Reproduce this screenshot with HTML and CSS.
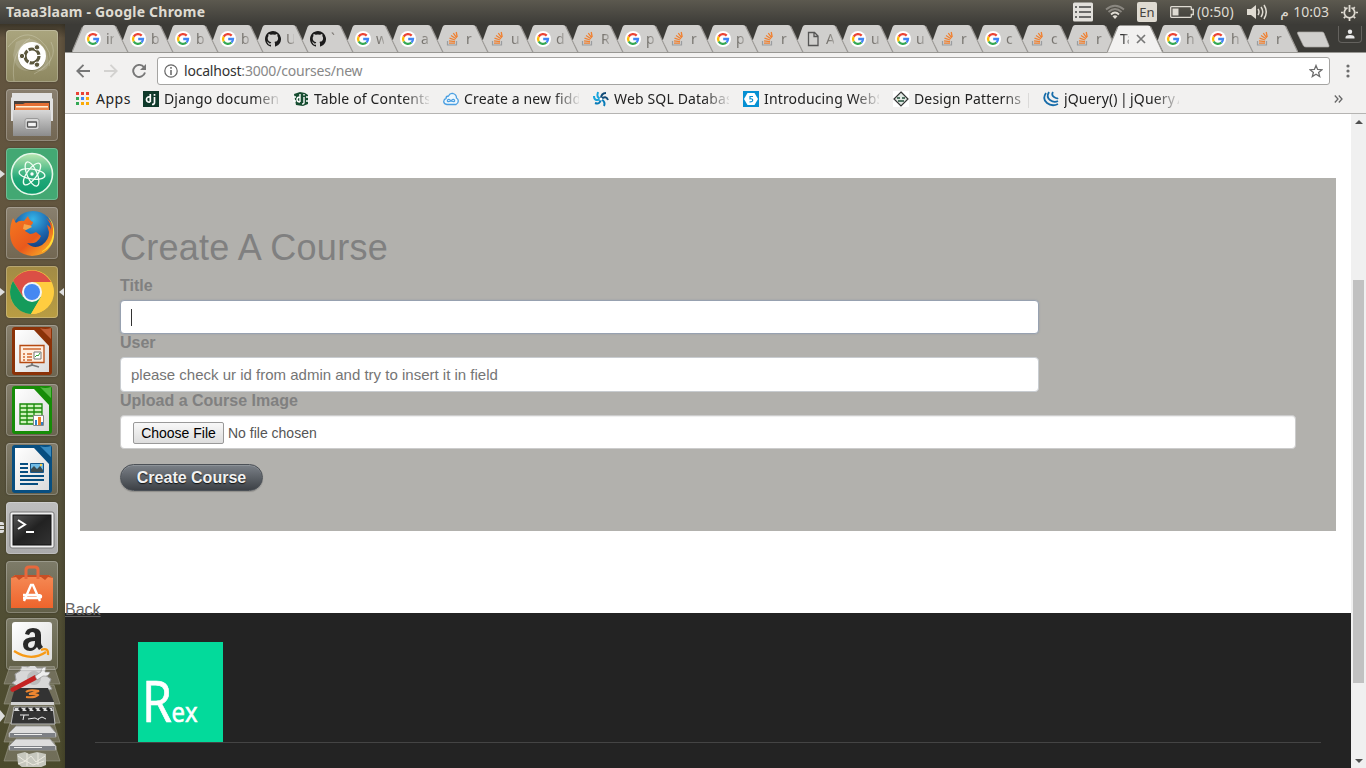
FILE: index.html
```html
<!DOCTYPE html>
<html lang="en">
<head>
<meta charset="utf-8">
<title>Taaa3laam</title>
<link rel="stylesheet" href="styles.css">
</head>
<body>
<svg class="defs" width="0" height="0" aria-hidden="true">
  <defs>
    <linearGradient id="paper" x2="1" y2="1"><stop stop-color="#fff"/><stop offset="1" stop-color="#dcdcdc"/></linearGradient>
    <linearGradient id="silver" x2="0" y2="1"><stop stop-color="#d8d8d8"/><stop offset="1" stop-color="#8c8c8c"/></linearGradient>
    <linearGradient id="bag" x2="0" y2="1"><stop stop-color="#f58a55"/><stop offset="1" stop-color="#ee642c"/></linearGradient>
    <linearGradient id="atomg" x2="0" y2="1"><stop stop-color="#b9e6b0"/><stop offset=".6" stop-color="#22a878"/><stop offset="1" stop-color="#0c9c6c"/></linearGradient>
    <linearGradient id="fox" x2="1" y2="1"><stop stop-color="#f47a20"/><stop offset=".55" stop-color="#e9591c"/><stop offset="1" stop-color="#ffc62a"/></linearGradient>
    <radialGradient id="globe" cx=".5" cy=".2" r=".8"><stop stop-color="#35b4e8"/><stop offset=".5" stop-color="#1d66ad"/><stop offset="1" stop-color="#142e6a"/></radialGradient>
    <linearGradient id="screen" x2="1" y2="1"><stop stop-color="#555"/><stop offset=".5" stop-color="#222"/><stop offset="1" stop-color="#333"/></linearGradient>
  </defs>
  <symbol id="tab" viewBox="0 0 56 28"><path class="tab-fill" d="M11.300 28L5.700 16.500L10.500 3Q11.500 1 13 1H41Q43 1 44 3L55.800 28Z"/><path class="tab-line" d="M43.500 2L55.800 28"/></symbol>
  <symbol id="tab-full" viewBox="0 0 56 28"><path class="tab-fill" d="M0 28L10.500 3Q11.500 1 13 1H41Q43 1 44 3L55.800 28Z"/><path class="tab-line" d="M0 28L10.500 3M43.500 2L55.800 28"/></symbol>
  <symbol id="google" viewBox="0 0 16 16"><circle cx="8" cy="8" r="8" fill="#fff"/><g fill="none" stroke-width="2.300"><path d="M11.700 4.600A5 5 0 0 0 3.700 5.600" stroke="#ea4335"/><path d="M3.700 5.600A5 5 0 0 0 3.700 10.500" stroke="#fbbc05"/><path d="M3.700 10.500A5 5 0 0 0 11.500 11.500" stroke="#34a853"/><path d="M11.500 11.500A5 5 0 0 0 13 8H8.200" stroke="#4285f4"/></g></symbol>
  <symbol id="github" viewBox="0 0 16 16"><path fill="#1b1b1b" d="M8 0C3.600 0 0 3.600 0 8c0 3.500 2.300 6.500 5.500 7.600.4.100.5-.2.500-.4v-1.500c-2 .5-2.700-.8-2.900-1.300-.1-.3-.5-.9-.9-1.100-.3-.2-.7-.6 0-.6.600 0 1.100.6 1.200.8.700 1.200 1.900.9 2.400.7.100-.5.300-.9.500-1.100C4.500 10.900 2.700 10.200 2.700 7.100c0-.9.300-1.600.8-2.100-.1-.2-.3-1 .1-2.100 0 0 .7-.2 2.200.8a7.500 7.500 0 0 1 4.200 0c1.500-1 2.200-.8 2.200-.8.400 1.100.2 1.900.1 2.100.5.600.8 1.300.8 2.100 0 3.100-1.900 3.700-3.700 3.900.3.300.6.700.6 1.500v2.700c0 .2.100.5.500.4A8 8 0 0 0 8 0Z"/></symbol>
  <symbol id="stack" viewBox="0 0 16 16"><path d="M2.500 10v4h9v-4" fill="none" stroke="#9a9da0" stroke-width="1.200"/><path d="M4 12.200h6M4 9.900l6 .7M4.500 7.200l5.700 1.800M6 4.500l5 3.200M8.300 2.200l3.500 4.600M11.200 1l1 5" fill="none" stroke="#f08030" stroke-width="1.300"/></symbol>
  <symbol id="page" viewBox="0 0 16 16"><path d="M3.500 1.500h6l3.500 3.500v9.500H3.500zM9 1.500v4h4" fill="none" stroke="#555" stroke-width="1.300"/></symbol>
</svg>

<header class="panel">
  <h1 class="panel-title">Taaa3laam - Google Chrome</h1>
  <div class="tray">
    <svg width="20" height="20" viewBox="0 0 20 20"><rect y=".5" width="20" height="19" rx="1.500" fill="#e2e0db"/><path d="M2 5h2M2 10h2M2 15h2M6 5h12M6 10h12M6 15h12" stroke="#444" stroke-width="1.600"/></svg>
    <svg class="wifi" width="20" height="16" viewBox="0 0 20 16"><g fill="none" stroke-width="1.800"><path d="M1 5.500Q10-2 19 5.500M3.500 8Q10 2 16.500 8" stroke="#8a8780"/><path d="M6 10.500Q10 6.500 14 10.500" stroke="#dfdbd2"/></g><path d="M7.500 12.300Q10 10 12.500 12.300L10 15Z" fill="#dfdbd2"/></svg>
    <span class="lang">En</span>
    <svg class="battery" width="24" height="12" viewBox="0 0 24 12"><path d="M1.500.7h19q.8 0 .8.800v2h2v5h-2v2q0 .8-.8.800h-19q-.8 0-.8-.8v-9q0-.8.8-.8Z" fill="none" stroke="#dfdbd2" stroke-width="1.300"/><path d="M2.500 2.500h6v7h-6z" fill="#dfdbd2"/></svg>
    <span class="battery-time">(0:50)</span>
    <svg class="sound" width="20" height="16" viewBox="0 0 20 16"><path d="M0 5h4l5-4v14l-5-4H0Z" fill="#dfdbd2"/><path d="M11 5q2 3 0 6M14 3q3.500 5 0 10M17 1q4.500 7 0 14" fill="none" stroke="#dfdbd2" stroke-width="1.500"/></svg>
    <span class="clock"><bdi class="pm">م</bdi><bdi>10:03</bdi></span>
    <svg class="gear" width="17" height="17" viewBox="0 0 17 17"><path d="M6.500 3.800A5.200 5.200 0 1 0 10.500 3.800" fill="none" stroke="#dfdbd2" stroke-width="1.700"/><path d="M8.500 1v7" stroke="#dfdbd2" stroke-width="1.800"/><path d="M3.200 3.200l1.600 1.600M13.800 3.200l-1.600 1.600M0 8.500h2.500M14.500 8.500H17M2.800 14.200l1.600-1.600M14.200 14.200l-1.600-1.600M8.500 14v3" stroke="#dfdbd2" stroke-width="1.700"/></svg>
  </div>
</header>

<div class="desktop">
<nav class="launcher">
  <div class="tile dash"><svg viewBox="0 0 52 52"><g fill="none" stroke="#e5e3cf" stroke-opacity=".3"><path d="M8 51Q4 22 24 8M45 12Q54 30 28 44M2 17Q18-3 34 10Q48 22 43 36" stroke-width="1"/></g><path d="M10 12Q30 2 41 23Q48 45 26 40Q10 44 7 25" fill="#fff" opacity=".15"/><circle cx="26" cy="27" r="14" fill="#666342" opacity=".5"/><circle cx="26" cy="26" r="14" fill="#fff"/><circle cx="26" cy="26" r="7" fill="none" stroke="#5b573d" stroke-width="3.200" stroke-dasharray="13.200 1.460"/><g fill="#5b573d" stroke="#fff"><circle cx="16" cy="26" r="2.700"/><circle cx="31" cy="17.300" r="2.700"/><circle cx="31" cy="34.700" r="2.700"/></g></svg></div>
  <div class="tile files"><svg viewBox="0 0 52 52"><path d="M6 4h40v5l1 1v22H5V9l1-1z" fill="#e2e2e2"/><path d="M8 12h36v10H8z" fill="#48413c"/><path d="M9 15h8l2-1h24v7H9z" fill="#e46f34"/><path d="M10 17h32v5H10z" fill="#fff0d7"/><path d="M9 18.500h34V22H9z" fill="#ee8549"/><path d="M7 21h38v26H7z" fill="url(#silver)"/><rect x="19" y="29.500" width="14" height="11" rx="2" fill="#d8d8d8" stroke="#999"/><rect x="21.500" y="33" width="9" height="5" rx=".5" fill="#f3f3f3" stroke="#545454" stroke-width="1.300"/></svg></div>
  <div class="tile atom run-left"><svg viewBox="0 0 52 52"><circle cx="26" cy="26" r="20.500" fill="url(#atomg)" stroke="#e5f8e9" stroke-width="1.600"/><g fill="none" stroke="#f2fff5" stroke-width="1.300"><ellipse cx="26" cy="26" rx="13" ry="5" transform="rotate(8 26 26)"/><ellipse cx="26" cy="26" rx="13" ry="5" transform="rotate(67 26 26)"/><ellipse cx="26" cy="26" rx="13" ry="5" transform="rotate(126 26 26)"/></g><circle cx="26" cy="26" r="1.700" fill="#fff"/></svg></div>
  <div class="tile"><svg viewBox="0 0 52 52"><circle cx="27" cy="25" r="21" fill="url(#globe)"/><path d="M7 11l3 5q3-3 8-2l4-5q1 4 5 6 0 3-5 5l-3 4 5 3q3 0 6-2l5 4q-4 9-14 7 7 7 15 2 7-5 7-13l-2-7q3 1 4 5 0-8-5-12 9 5 8 17-2 20-22 21Q5 46 4 27q0-9 3-16Z" fill="url(#fox)"/><path d="M42 10q6 7 5 17-2 12-12 18 15-5 13-23-1-8-6-12Z" fill="#ffde38"/><path d="M18 17l4 1q3 0 4 2l-6 3-3-1Z" fill="#f6a44a"/></svg></div>
  <div class="tile chrome run-left run-right"><svg viewBox="0 0 52 52"><circle cx="26" cy="26" r="22" fill="#ffcf40"/><path d="M7 15A22 22 0 0 1 45 16H26L17 31Z" fill="#db4f45"/><path d="M7 15A22 22 0 0 0 25 48L35 31 17 31Z" fill="#159b5b"/><path d="M45 16A22 22 0 0 1 25 48L35 31Q38 23 32 16Z" fill="#ffcd40"/><circle cx="26" cy="26" r="10" fill="#f4f4f4"/><circle cx="26" cy="26" r="8" fill="#4688f1"/></svg></div>
  <div class="tile"><svg viewBox="0 0 52 52"><rect x="6" y="2" width="40" height="48" rx="3" fill="#8b3208"/><path d="M34 3q5 2 11 0v11Z" fill="#bf6038"/><path d="M9 5h19l15 16v26H9Z" fill="url(#paper)"/><path d="M14 20.500h24v17H14Z" fill="#ffeedf" stroke="#b64a12" stroke-width="1.300"/><path d="M17 24h18M17 29h2M17 32h2M17 35h2M21 29h5M21 32h5M21 35h5" stroke="#cf6830" stroke-width="1.700"/><path d="M28 27h7v7h-7Z" fill="#fff" stroke="#777"/><path d="M29 32l2-2 1 1 2-3" fill="none" stroke="#37a339"/><path d="M26 38v2l-6 2M26 40l7 2" fill="none" stroke="#777" stroke-width="1.800"/></svg></div>
  <div class="tile"><svg viewBox="0 0 52 52"><rect x="6" y="2" width="40" height="48" rx="3" fill="#168c07"/><path d="M34 3q5 2 11 0v11Z" fill="#55b944"/><path d="M9 5h19l15 16v26H9Z" fill="url(#paper)"/><path d="M14 20h22v20H14ZM14 24h22M14 28h22M14 32h22M14 36h22M21 20v20M28 20v20" fill="#cff2bb" stroke="#188909" stroke-width="1.300"/><path d="M27.500 31.500h10v10h-10z" fill="#fff" stroke="#888"/><path d="M29 41v-5h2v5M35 41v-3h2v3" fill="#3282c6"/><path d="M32 41v-8h3v8" fill="#eb812a"/></svg></div>
  <div class="tile"><svg viewBox="0 0 52 52"><rect x="6" y="2" width="40" height="48" rx="3" fill="#074e80"/><path d="M34 3q5 2 11 0v11Z" fill="#398bc0"/><path d="M9 5h19l15 16v26H9Z" fill="url(#paper)"/><path d="M14 21h8M14 25h8M14 29h8M14 33h24M14 37h24M14 41h18" stroke="#074e80" stroke-width="1.900"/><path d="M24.500 20.500h13v9h-13z" fill="#70bbe6" stroke="#17588b"/><path d="M25 29v-3l3-3 3 3 3-3 3 4v2Z" fill="#3a4b51"/><circle cx="35" cy="22" r="1.200" fill="#ffcc45"/></svg></div>
  <div class="tile terminal run-many"><svg viewBox="0 0 52 52"><rect x="4" y="10" width="44" height="36" rx="2" fill="#f0f0f0" stroke="#777"/><rect x="7" y="13" width="38" height="30" fill="url(#screen)" stroke="#111"/><path d="M12 18l7 4.500-7 4.500M20 30h8" fill="none" stroke="#fff" stroke-width="2"/></svg></div>
  <div class="tile"><svg viewBox="0 0 52 52"><path d="M5 17l4-3h34l4 3v30H5Z" fill="url(#bag)"/><path d="M5 17l4-3h34l4 3-5-1-3 3-4-3H17l-4 3-3-3Z" fill="#c84e24"/><path d="M20 18V9q0-3 3-3h6q3 0 3 3v9" fill="none" stroke="#e7683c" stroke-width="3"/><path d="M18 40l7-16h2l7 16M17 34h15q3 0 3 1.500T32 37H17" fill="none" stroke="#fff" stroke-width="2.400"/></svg></div>
  <div class="tile amazon"><svg viewBox="0 0 52 52"><rect x="6" y="4" width="40" height="39" rx="3" fill="url(#paper)"/><path d="M19 16q1-6 8-6 8 0 8 7v8q0 2 2 4l-4 3-2-3q-3 4-7 4-7 0-7-7 0-7 12-7v-2q0-3-3-3-2 0-3 3Zm10 7q-7 0-7 4 0 3 3 3 4 0 4-7Z" fill="#282828"/><path d="M8 33q17 11 32 1M35 32q8-3 7 5" fill="none" stroke="#f79a16" stroke-width="2.200"/></svg></div>
  <svg class="folded" width="65" height="101" viewBox="0 0 65 101">
    <g fill="#8f8d7d" fill-opacity=".55" stroke="#a5a394" stroke-opacity=".5"><path d="M10 0H54L60 18H4ZM10 19H54L60 38H4ZM10 38H54L60 57H4ZM10 57H54L60 76H4ZM10 76H54L60 95H4Z"/></g>
    <path d="M15 8l5-3 2-5 6 1 5-3 4 4 7 0 1 7 6 4-2 5 3 5-9 3H18l1-5-7-4 4-3Z" fill="#d8d8d8" stroke="#999"/><circle cx="34" cy="12" r="7" fill="#bcbcbc"/>
    <path d="M15 22h33l6 14H11Z" fill="#333"/><path d="M11 36h43v3H11Z" fill="#d0d0d0"/><path d="M26 26q3-3 13-1l-10 3q8 0 9 1-3 3-12 2" fill="none" stroke="#ed8630" stroke-width="2"/>
    <path d="M11 22L35 9l3 4-25 13q-4-1-2-4Z" fill="#c42322"/><path d="M35 10l6-4q0-5 5-5l-1 5 5 0q-1 5-7 4l-6 4Z" fill="#eee" stroke="#888" stroke-width=".6"/>
    <path d="M14 41h39l2 17H11Z" fill="#333" stroke="#bbb"/><path d="M15 42h37l1 3H14Z" fill="#ddd"/><path d="M19 42l3 3M26 42l3 3M33 42l3 3M40 42l3 3M47 42l3 3" stroke="#222" stroke-width="3"/><path d="M20 49h9M24 49l-1 5M28 53l7-1 4 2M38 53l4-2 4 2" fill="none" stroke="#eee"/>
    <path d="M16 60h34l6 7v4H9v-4ZM16 73h34l6 7v4H9v-4Z" fill="#ddd" stroke="#999"/><path d="M10 67h45v4H10ZM10 80h45v4H10Z" fill="#7d8085"/><path d="M14 68.500h28M14 81.500h28" stroke="#eee"/>
    <path d="M17 88l8-2 4 2 8-2 9 2v11l-7 3H23l-5-4Z" fill="#c6c7be"/><path d="M18 90l7 5 6-5 5 6 9-6M18 98l8-3 7 4 11-4M27 87v13M38 87v12" stroke="#eceae0" fill="none"/>
    <path d="M0 44l5 6-5 6Z" fill="#ddd"/>
  </svg>
</nav>

<section class="browser">
  <div class="tabstrip">
    <div class="tab"><svg class="shape"><use href="#tab-full"/></svg><svg class="fav"><use href="#google"/></svg><span>in</span></div>
    <div class="tab"><svg class="shape"><use href="#tab"/></svg><svg class="fav"><use href="#google"/></svg><span>b</span></div>
    <div class="tab"><svg class="shape"><use href="#tab"/></svg><svg class="fav"><use href="#google"/></svg><span>b</span></div>
    <div class="tab"><svg class="shape"><use href="#tab"/></svg><svg class="fav"><use href="#google"/></svg><span>b</span></div>
    <div class="tab"><svg class="shape"><use href="#tab"/></svg><svg class="fav"><use href="#github"/></svg><span>U</span></div>
    <div class="tab"><svg class="shape"><use href="#tab"/></svg><svg class="fav"><use href="#github"/></svg><span>`</span></div>
    <div class="tab"><svg class="shape"><use href="#tab"/></svg><svg class="fav"><use href="#google"/></svg><span>w</span></div>
    <div class="tab"><svg class="shape"><use href="#tab"/></svg><svg class="fav"><use href="#google"/></svg><span>a</span></div>
    <div class="tab"><svg class="shape"><use href="#tab"/></svg><svg class="fav"><use href="#stack"/></svg><span>r</span></div>
    <div class="tab"><svg class="shape"><use href="#tab"/></svg><svg class="fav"><use href="#stack"/></svg><span>u</span></div>
    <div class="tab"><svg class="shape"><use href="#tab"/></svg><svg class="fav"><use href="#google"/></svg><span>d</span></div>
    <div class="tab"><svg class="shape"><use href="#tab"/></svg><svg class="fav"><use href="#stack"/></svg><span>R</span></div>
    <div class="tab"><svg class="shape"><use href="#tab"/></svg><svg class="fav"><use href="#google"/></svg><span>p</span></div>
    <div class="tab"><svg class="shape"><use href="#tab"/></svg><svg class="fav"><use href="#stack"/></svg><span>r</span></div>
    <div class="tab"><svg class="shape"><use href="#tab"/></svg><svg class="fav"><use href="#google"/></svg><span>p</span></div>
    <div class="tab"><svg class="shape"><use href="#tab"/></svg><svg class="fav"><use href="#stack"/></svg><span>r</span></div>
    <div class="tab"><svg class="shape"><use href="#tab"/></svg><svg class="fav"><use href="#page"/></svg><span>A</span></div>
    <div class="tab"><svg class="shape"><use href="#tab"/></svg><svg class="fav"><use href="#google"/></svg><span>u</span></div>
    <div class="tab"><svg class="shape"><use href="#tab"/></svg><svg class="fav"><use href="#google"/></svg><span>u</span></div>
    <div class="tab"><svg class="shape"><use href="#tab"/></svg><svg class="fav"><use href="#stack"/></svg><span>r</span></div>
    <div class="tab"><svg class="shape"><use href="#tab"/></svg><svg class="fav"><use href="#google"/></svg><span>c</span></div>
    <div class="tab"><svg class="shape"><use href="#tab"/></svg><svg class="fav"><use href="#stack"/></svg><span>c</span></div>
    <div class="tab"><svg class="shape"><use href="#tab"/></svg><svg class="fav"><use href="#stack"/></svg><span>r</span></div>
    <div class="tab active"><svg class="shape"><use href="#tab-full"/></svg><span>Ta</span><svg class="close" width="10" height="10" viewBox="0 0 10 10"><path d="M1 1l8 8M9 1L1 9" stroke="#777" stroke-width="1.700"/></svg></div>
    <div class="tab"><svg class="shape"><use href="#tab"/></svg><svg class="fav"><use href="#google"/></svg><span>h</span></div>
    <div class="tab"><svg class="shape"><use href="#tab"/></svg><svg class="fav"><use href="#google"/></svg><span>h</span></div>
    <div class="tab"><svg class="shape"><use href="#tab"/></svg><svg class="fav"><use href="#stack"/></svg><span>r</span></div>
    <svg class="newtab" width="34" height="17" viewBox="0 0 34 17"><path d="M2.500 1H26q1.500 0 2 1.200L33 14.500q.5 1.500-1 1.500H10q-2 0-2.700-1.500L1.500 2.500Q1 1 2.500 1Z" fill="#d0cfcd" stroke="#aaa8a3" stroke-width=".7"/></svg>
    <div class="profile"><svg width="10" height="10" viewBox="0 0 10 10"><circle cx="5" cy="2.700" r="2.200" fill="#e8e8e8"/><path d="M.5 9.500V8Q1 6 5 6t4.500 2v1.500Z" fill="#e8e8e8"/></svg></div>
  </div>

  <div class="toolbar">
    <svg class="back" width="14" height="14" viewBox="0 0 14 14"><path d="M14 7H1.500M7.500.8L1.300 7l6.200 6.200" fill="none" stroke="#777" stroke-width="1.900"/></svg>
    <svg class="forward" width="14" height="14" viewBox="0 0 14 14"><path d="M0 7h12.500M6.500.8L12.700 7l-6.200 6.200" fill="none" stroke="#d3d2d0" stroke-width="1.900"/></svg>
    <svg class="reload" width="14" height="14" viewBox="0 0 14 14"><path d="M12 3.300A6 6 0 1 0 13 8.500" fill="none" stroke="#777" stroke-width="1.900"/><path d="M14 0v6H8Z" fill="#777"/></svg>
    <div class="omnibox">
      <svg width="14" height="14" viewBox="0 0 14 14"><circle cx="7" cy="7" r="6.200" fill="none" stroke="#666" stroke-width="1.200"/><path d="M7 3v1.700M7 6v5" stroke="#666" stroke-width="1.500"/></svg>
      <span class="url"><b>localhost</b>:3000/courses/new</span>
      <svg class="star" width="14" height="14" viewBox="0 0 14 14"><path d="M7 1.500l1.600 3.900 4.300.3-3.300 2.700 1.100 4.200L7 10.300l-3.700 2.300 1.100-4.200L1.100 5.700l4.300-.3Z" fill="none" stroke="#6d6d6d" stroke-width="1.300"/></svg>
    </div>
    <svg class="menu" width="4" height="14" viewBox="0 0 4 14"><g fill="#6d6d6d"><circle cx="2" cy="2" r="1.600"/><circle cx="2" cy="7" r="1.600"/><circle cx="2" cy="12" r="1.600"/></g></svg>
  </div>

  <div class="bookmarks">
    <div class="apps"><svg width="13" height="13" viewBox="0 0 13 13"><path d="M0 0h3v3H0zM5 0h3v3H5zM10 0h3v3h-3z" fill="#ea4335"/><path d="M0 5h3v3H0zM0 10h3v3H0z" fill="#34a853"/><path d="M5 5h3v3H5z" fill="#4285f4"/><path d="M10 5h3v3h-3zM5 10h3v3H5zM10 10h3v3h-3z" fill="#fbab05"/></svg><span>Apps</span></div>
    <div class="bm"><svg viewBox="0 0 16 16"><path d="M0 0h16v16H0z" fill="#103a2b"/><path d="M7.300 3v8M7.300 6Q3.500 5.500 3.500 8.500T7.300 11M11.500 6v5.500q0 2-2.500 1.800M11.500 3v1.800" fill="none" stroke="#fff" stroke-width="1.700"/></svg><span>Django documentation</span></div>
    <div class="bm"><svg viewBox="0 0 16 16"><path d="M1 3l6-2 5 1 3 2v9l-5 2-7-1Z" fill="#174d31"/><path d="M7 3v8M7 6Q4 6 4 8.500T7 11M11 6v6q0 1-2 1M11 3v1.500M0 6h3M0 10h3M13 6h3M13 10h3" fill="none" stroke="#fff" stroke-width="1.400"/></svg><span>Table of Contents</span></div>
    <div class="bm"><svg viewBox="0 0 16 16"><path d="M4 13.500Q.7 13 .7 10.500 1 8 3 7.500 3 5 5.500 5 7 1.800 10 2.500q3.500 1 3.500 4.500 1.800.8 1.800 3t-2.300 3.500Z" fill="#eef7fd" stroke="#4b9fe1" stroke-width="1.300"/><path d="M8 10Q5.500 7 4.500 9.300T8 10Q10.500 7 11.500 9.300T8 10" fill="none" stroke="#4b9fe1" stroke-width="1.200"/></svg><span>Create a new fiddle</span></div>
    <div class="bm"><svg viewBox="0 0 16 16"><g fill="none" stroke-width="2"><path d="M8 8Q3 7 5 1M8 8Q1 11 1 5" stroke="#17a4dc"/><path d="M8 8Q8 2 13 2M8 8Q13 4 15 9" stroke="#104b78"/><path d="M8 8Q13 11 11 15M8 8Q7 14 2 12" stroke="#087bb8"/></g><circle cx="8" cy="8" r="1.500" fill="#fff"/></svg><span>Web SQL Database</span></div>
    <div class="bm"><svg viewBox="0 0 16 16"><path d="M0 0h16v16H0z" fill="#0590d3"/><path d="M4.500 2h7L15 8l-3.500 6h-7L1 8Z" fill="#fff"/><path d="M10 5.500H7v2.300Q9.700 7.500 9.700 9.300T6.500 10.800" fill="none" stroke="#0590d3" stroke-width="1.200"/></svg><span>Introducing WebSockets</span></div>
    <div class="bm"><svg viewBox="0 0 16 16"><path d="M0 0h16v16H0z" fill="#fff"/><path d="M8 1l7 7-7 7-7-7Z" fill="#e1e9e4" stroke="#333" stroke-width="1.200"/><path d="M4 6h3v2H4zM9 6h3v2H9zM5 9h6v2H5z" fill="#537565"/></svg><span>Design Patterns | Object</span></div>
    <div class="bm"><svg viewBox="0 0 16 16"><g fill="none" stroke="#176ca9" stroke-width="1.800"><path d="M3 2Q-1 8 4 12t11 1"/><path d="M6 1Q3 6 7 9t8 1"/><path d="M10 1Q8 4 11 6t4 1"/></g></svg><span class="jquery">jQuery() | jQuery API</span></div>
    <svg class="more" width="9" height="8" viewBox="0 0 9 8"><path d="M.8.500L4 4 .8 7.500M4.800.500L8 4 4.800 7.500" fill="none" stroke="#666" stroke-width="1.300"/></svg>
  </div>

  <div class="viewport">
    <main class="page">
      <form class="card">
        <h2>Create A Course</h2>
        <label>Title</label>
        <div class="field focused"><i class="caret"></i></div>
        <label>User</label>
        <div class="field user">please check ur id from admin and try to insert it in field</div>
        <label>Upload a Course Image</label>
        <div class="field file"><button type="button" class="choose">Choose File</button><span>No file chosen</span></div>
        <button type="button" class="submit">Create Course</button>
      </form>
      <a class="backlink">Back</a>
      <footer class="footer">
        <div class="footer-inner">
          <svg class="logo" width="85" height="100" viewBox="0 0 85 100"><rect width="85" height="100" fill="#03da9b"/><text x="4" y="80" font-size="57" textLength="30" lengthAdjust="spacingAndGlyphs">R</text><text x="33.500" y="80" font-size="28" textLength="26" lengthAdjust="spacingAndGlyphs">ex</text></svg>
        </div>
      </footer>
    </main>
    <div class="scrollbar"><i class="up"></i><i class="thumb"></i><i class="down"></i></div>
  </div>
</section>
</div>
</body>
</html>
```

FILE: styles.css
```css
* { box-sizing: border-box; }
body { margin: 0; width: 1366px; height: 768px; overflow: hidden; font-family: "Liberation Sans", Arial, sans-serif; background: #fff; display: flex; flex-direction: column; }
svg { display: block; flex: none; }
.defs { position: absolute; }

.panel { flex: none; height: 24px; display: flex; align-items: center; justify-content: space-between; padding: 0 8px 0 6px; background: linear-gradient(#5c594f, #3d3c38); color: #dfdbd2; font: 14px/24px "Noto Sans", sans-serif; }
.panel-title { margin: 0; font-size: 14px; font-weight: 700; letter-spacing: .21px; white-space: nowrap; }
.tray { display: flex; align-items: center; }
.wifi { margin-left: 12px; }
.lang { margin-left: 12px; width: 20px; height: 20px; border-radius: 2px; background: #dfdbd2; color: #45433f; font-size: 13px; line-height: 20px; text-align: center; }
.battery { margin-left: 13px; }
.battery-time { margin-left: 3px; width: 38px; white-space: nowrap; letter-spacing: .1px; }
.sound { margin-left: 12px; }
.clock { margin-left: 13px; width: 49px; display: flex; justify-content: space-between; letter-spacing: 0; }
.pm { width: 9px; font-family: "DejaVu Sans", sans-serif; }
.gear { margin-left: 12px; }

.desktop { flex: 1; min-height: 0; display: flex; }
.launcher { width: 65px; flex: none; padding: 6px 0 0 6px; display: flex; flex-direction: column; gap: 7px; background: linear-gradient(90deg, rgba(0,0,0,0) 92%, rgba(0,0,0,.12)), linear-gradient(#3b3528, #62543f 14px, #62563e 35%, #55513a 65%, #4b4a2c); overflow: hidden; }
.tile { position: relative; width: 52px; height: 52px; flex: none; border-radius: 4px; background: linear-gradient(rgba(255,255,255,.25), rgba(255,255,255,.1)); box-shadow: inset 0 0 0 1px rgba(255,255,255,.23), 0 0 2px rgba(0,0,0,.35); }
.tile svg { width: 52px; height: 52px; }
.dash { background: linear-gradient(#aaa57e, #8d8760); }
.atom { background: #43a873; }
.chrome { background: linear-gradient(#a28b45, #b99d43); }
.terminal { background: linear-gradient(#bebebe, #aaa); }
.amazon { margin-top: -2px; }
.run-left::before, .run-right::after { content: ""; position: absolute; top: 22px; border: 4px solid transparent; }
.run-left::before { left: -6px; border-left: 5px solid #dedede; border-right: 0; }
.run-right::after { right: -6px; border-right: 5px solid #dedede; border-left: 0; }
.run-many::before { content: ""; position: absolute; left: -6px; top: 20px; width: 4px; height: 11px; border-radius: 0 2px 2px 0; background: repeating-linear-gradient(#ddd 0 3px, transparent 3px 4px); }
.folded { margin: -11px 0 0 -6px; }

.browser { flex: 1; min-width: 0; display: flex; flex-direction: column; }
.tabstrip { height: 29px; flex: none; display: flex; padding: 0 0 0 7px; background: #3c3b37; border-bottom: 1px solid #989793; }
.tab { position: relative; width: 56px; margin-right: -11px; height: 28px; flex: none; display: flex; align-items: center; padding: 2px 0 0 13px; font: 14px/20px "Noto Sans", sans-serif; color: #77746f; }
.tab .shape { position: absolute; left: 0; top: 0; width: 56px; height: 28px; fill: #d0cfcd; stroke: #9b9995; }
.tab-fill { stroke: none; }
.tab-line { fill: none; stroke-width: 1.200; }
.tab .fav { position: relative; width: 16px; height: 16px; }
.tab span { position: relative; width: 8px; margin-left: 5px; overflow: hidden; white-space: nowrap; -webkit-mask: linear-gradient(90deg, #000 30%, rgba(0,0,0,.4)); mask: linear-gradient(90deg, #000 30%, rgba(0,0,0,.4)); }
.tab.active { z-index: 3; height: 29px; padding-top: 1px; color: #333; }
.tab.active .shape { fill: #f2f1f0; height: 29px; }
.tab.active span { margin-left: 0; width: 9px; }
.tab .close { position: relative; margin-left: 7px; }
.newtab { margin: 7px 0 0 9px; }
.profile { margin: 2px 0 0 8px; width: 24px; height: 17px; flex: none; border: 1px solid #64625e; border-top: 0; border-radius: 0 0 4px 4px; display: flex; justify-content: center; padding-top: 3px; }

.toolbar { height: 33px; flex: none; display: flex; align-items: center; padding: 2px 15px 0 11px; background: #f2f1f0; }
.forward, .reload { margin-left: 14px; }
.omnibox { margin-left: 11px; width: 1173px; height: 28px; border: 1px solid #a5a4a2; border-radius: 3px; background: #fff; display: flex; align-items: center; padding: 0 6px; }
.url { flex: 1; margin-left: 6px; font: 14px/20px "Noto Sans", sans-serif; color: #888; white-space: nowrap; letter-spacing: -.2px; }
.url b { font-weight: 400; color: #333; }
.menu { margin-left: 16px; }

.bookmarks { height: 28px; flex: none; display: flex; align-items: center; gap: 14px; padding: 0 0 2px 11px; background: #f2f1f0; border-bottom: 1px solid #b5b4b2; font: 14px/20px "Noto Sans", sans-serif; letter-spacing: .15px; color: #222; }
.apps { width: 53px; display: flex; align-items: center; }
.apps span { margin-left: 7px; letter-spacing: .5px; }
.bm { width: 136px; display: flex; align-items: center; }
.bm svg { width: 16px; height: 16px; }
.bm span { margin-left: 5px; width: 115px; overflow: hidden; white-space: nowrap; -webkit-mask: linear-gradient(90deg, #000 78%, rgba(0,0,0,.1)); mask: linear-gradient(90deg, #000 78%, rgba(0,0,0,.1)); }
.bm .jquery { word-spacing: -1.500px; }
.more { margin-left: 141px; }

.viewport { flex: 1; min-height: 0; display: flex; }
.page { width: 1286px; display: flex; flex-direction: column; padding-top: 64px; color: #555; }
.card { flex: none; margin: 0 15px; height: 353px; padding: 50px 40px 40px; background: #b2b1ad; color: #808080; }
.card h2 { margin: 0 0 9px; font-size: 36px; line-height: 40px; font-weight: 400; letter-spacing: .25px; }
.card label { display: block; font-size: 16px; line-height: 18px; font-weight: 700; margin-bottom: 5px; }
.field { width: 919px; height: 34px; display: flex; align-items: center; padding: 0 10px; border: 1px solid #c8ccd0; border-radius: 4px; background: #fff; color: #757575; font-size: 15px; }
.focused { border-color: #97a1b0; box-shadow: 0 0 2px rgba(110,130,160,.4); }
.caret { width: 1px; height: 17px; background: #333; margin-top: 1px; }
.user { height: 35px; }
.file { width: 1176px; height: 34px; padding: 2px 12px 0; border-color: #ccc; font-size: 14px; color: #555; box-shadow: inset 0 1px 1px rgba(0,0,0,.07); }
.choose { width: 91px; height: 22px; margin-right: 4px; padding: 0; border: 1px solid #999; border-radius: 2px; background: linear-gradient(#f8f8f8, #ddd); font: 14px "Liberation Sans", Arial, sans-serif; color: #000; white-space: nowrap; }
.submit { display: block; width: 143px; height: 27px; margin-top: 15px; padding: 0; border: 1px solid #4c5157; border-radius: 14px; background: linear-gradient(#7b8188, #3d4146); box-shadow: inset 0 1px 0 rgba(255,255,255,.15), 0 1px 1px rgba(0,0,0,.2); font: 700 16px "Liberation Sans", Arial, sans-serif; color: #f2f2f2; text-shadow: 0 1px 1px #111; }
.backlink { position: relative; z-index: 1; align-self: flex-start; margin: 70px 0 -6px; font-size: 16px; line-height: 18px; text-decoration: underline; color: #666; }
.footer { flex: 1; background: #232323; padding: 29px 30px 0; }
.footer-inner { padding-left: 43px; border-bottom: 1px solid #444; }
.logo text { font-family: "Open Sans", sans-serif; fill: #fff; stroke: #fff; stroke-width: .7px; }
.scrollbar { width: 15px; background: #f0f0f0; display: flex; flex-direction: column; align-items: center; padding: 6px 0 5px; }
.up, .down { width: 0; height: 0; border: 4px solid transparent; }
.up { border-bottom-color: #505050; border-top: 0; }
.down { border-top-color: #505050; border-bottom: 0; margin-top: auto; }
.thumb { width: 11px; height: 403px; margin-top: 156px; background: #c1c1c1; }
```
